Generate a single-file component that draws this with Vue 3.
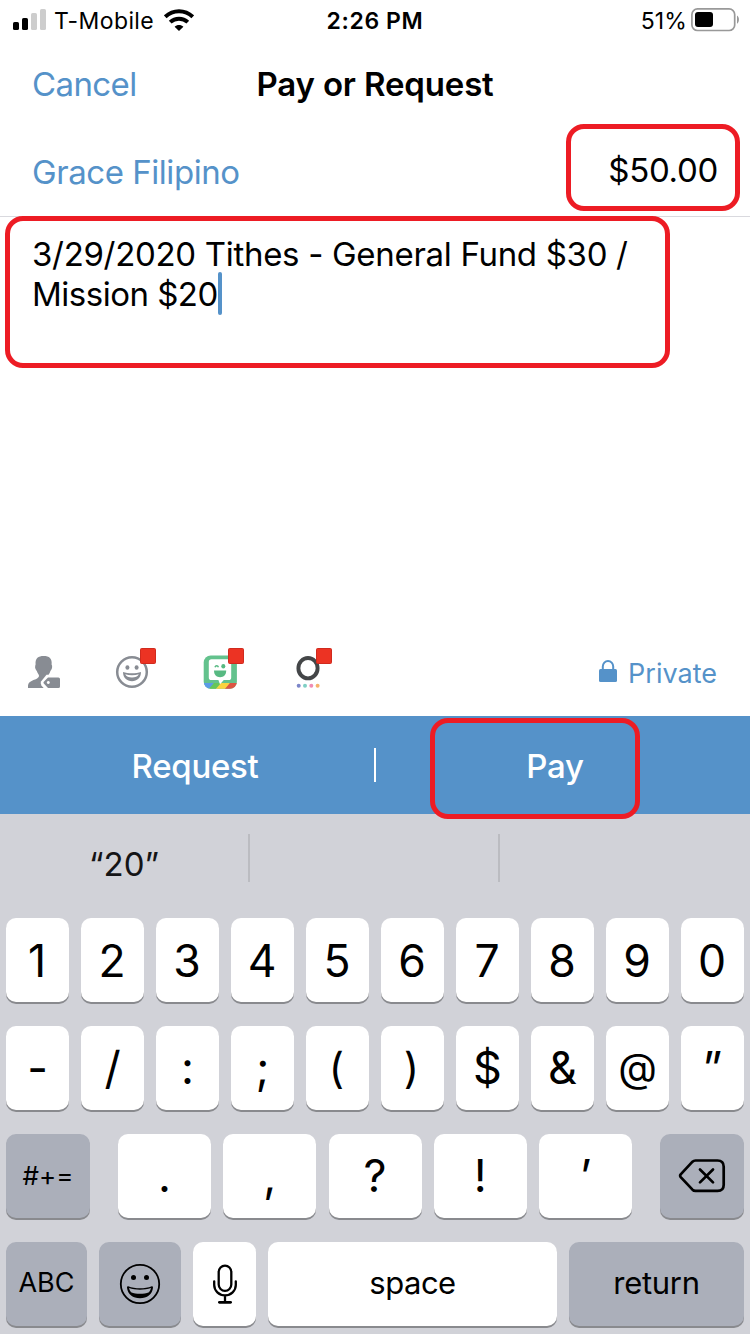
<script setup>
const rowOne = ['1', '2', '3', '4', '5', '6', '7', '8', '9', '0']
const rowTwo = [
  { c: '-', k: 'hyphen' }, { c: '/', k: 'slash' }, { c: ':', k: 'colon' }, { c: ';', k: 'semi' },
  { c: '(', k: 'paren' }, { c: ')', k: 'paren' }, { c: '$', k: 'dollar' }, { c: '&', k: 'amp' },
  { c: '@', k: 'at' }, { c: '”', k: 'quote' }
]
const rowThree = [
  { c: '.', k: 'dot' }, { c: ',', k: 'comma' }, { c: '?', k: 'ask' }, { c: '!', k: 'bang' }, { c: '’', k: 'apos' }
]
</script>

<template>
  <div class="screen">
    <header class="status">
      <div class="carrier">
        <svg class="signal" width="34" height="22" viewBox="0 0 34 22">
          <rect x="0" y="13" width="6" height="8" rx="1.6" fill="#000" />
          <rect x="9" y="9" width="6" height="12" rx="1.6" fill="#000" />
          <rect x="18" y="4" width="6" height="17" rx="1.6" fill="#cdcdcd" />
          <rect x="27" y="0" width="6" height="21" rx="1.6" fill="#cdcdcd" />
        </svg>
        <span class="carrier-name">T-Mobile</span>
        <svg class="wifi" width="30" height="22" viewBox="0 0 30 22">
          <g fill="none" stroke="#000" stroke-width="4">
            <path d="M1.200 7.800C9 .3 21 .3 28.800 7.800" />
            <path d="M6.200 13.100C11.200 8.500 18.800 8.500 23.800 13.100" />
          </g>
          <path d="M15 22l-4.400-4.300c2.400-2.300 6.400-2.300 8.800 0z" />
        </svg>
      </div>
      <div class="clock">2:26 PM</div>
      <div class="power">
        <span class="percent">51%</span>
        <svg width="49" height="24" viewBox="0 0 49 24">
          <rect x=".9" y=".9" width="42.800" height="21.600" rx="5.600" fill="none" stroke="#999" stroke-width="1.700" />
          <rect x="4" y="4" width="18" height="15" rx="3" />
          <path d="M46 7.600c2.600 1.400 2.600 6.800 0 8.200z" fill="#999" />
        </svg>
      </div>
    </header>

    <nav class="nav">
      <a class="cancel">Cancel</a>
      <h1 class="title">Pay or Request</h1>
    </nav>

    <section class="recipient">
      <span class="name">Grace Filipino</span>
      <span class="amount">$50.00</span>
      <i class="ring ring-amount"></i>
    </section>

    <section class="note">
      <p class="line one">3/29/2020 Tithes - General Fund $30 /</p>
      <p class="line two"><span>Mission $20</span><i class="caret"></i></p>
      <i class="ring ring-note"></i>
    </section>

    <section class="tools">
      <svg class="tool" width="48" height="44" viewBox="0 0 48 44">
        <path fill="#888c93" d="M0 42v-2.500c0-2.500 2.500-4 5-5.200 3-1.300 6-2.400 6-4.600 0-1.500-1.600-2.400-2.200-4.700-1-.8-2.100-3.300-1.600-5 0-.7.400-1 .4-1.400-.6-6.600 2.800-8.600 8-8.600 5.600 0 8.800 2.500 8 8.600 0 .5.500.8.500 1.500.3 1.900-.8 4.200-1.700 4.900-.5 2.300-2 3.300-2 4.700 0 .6.400 1 .4 1L13.300 36v3.500L15.800 42z" />
        <path d="M12.800 37.800V35.800L18.500 28.800H32.500V43H17z" fill="#fff" />
        <path fill="#888c93" fill-rule="evenodd" d="M20 31.400h10.400q1.600 0 1.600 1.600v7.400q0 1.600-1.600 1.600H20l-4.200-4.400q-.8-.9 0-1.800zM20.300 35a1.500 1.500 0 1 0 .01 0z" />
      </svg>
      <svg class="tool face" width="48" height="44" viewBox="0 0 48 44">
        <circle cx="16" cy="26" r="14.800" fill="none" stroke="#888c93" stroke-width="2.500" />
        <ellipse cx="11.400" cy="21.500" rx="2" ry="2.200" fill="#888c93" />
        <ellipse cx="20.600" cy="21.500" rx="2" ry="2.200" fill="#888c93" />
        <path d="M7 26c5 1.800 13 1.800 18 0 0 5.800-4 9.200-9 9.200s-9-3.400-9-9.200z" fill="#888c93" />
        <path d="M9.200 28.200c4 1.300 9.600 1.300 13.600 0-1 2.200-3.600 3.300-6.800 3.300s-5.800-1.100-6.800-3.300z" fill="#fff" />
        <rect x="24.500" y="2.500" width="15" height="15" rx="1" fill="#ec3323" stroke="#d02a1e" />
      </svg>
      <svg class="tool" width="48" height="44" viewBox="0 0 48 44">
        <defs><clipPath id="tile"><rect x="-.3" y="9.500" width="33.200" height="33.200" rx="7" /></clipPath></defs>
        <g clip-path="url(#tile)">
          <rect x="-1" y="9" width="35" height="35" fill="#63c28d" />
          <path d="M-1 37h11l-6 7h-5z" fill="#5a9be6" />
          <path d="M10 37h7l-6 7H4z" fill="#66c659" />
          <path d="M17 37h9l-5 7H11z" fill="#fad33f" />
          <path d="M26 37h8v7H20z" fill="#dc5543" />
        </g>
        <path d="M7.500 13.200h17q2.700 0 2.700 2.700v15.500q0 2.700-2.700 2.700h-4.700L16 38.200l-1.600-4.100H7.500q-2.700 0-2.700-2.700V15.900q0-2.700 2.700-2.700z" fill="#fff" />
        <path d="M10 24.500h12.200c0 4.500-2.500 6.700-6.100 6.700S10 29 10 24.500z" fill="#57b982" />
        <ellipse cx="19.300" cy="20.300" rx="2" ry="2.300" fill="#57b982" />
        <path d="M11 21.300c.6-2 2.800-2 3.400 0" fill="none" stroke="#57b982" stroke-width="1.500" />
        <rect x="24.500" y="2.500" width="15" height="15" rx="1" fill="#ec3323" stroke="#d02a1e" />
      </svg>
      <svg class="tool" width="48" height="44" viewBox="0 0 48 44">
        <ellipse cx="16" cy="22.200" rx="9.600" ry="10.200" fill="none" stroke="#444648" stroke-width="3.900" />
        <circle cx="6.700" cy="39.700" r="2" fill="#7c86c9" />
        <circle cx="13" cy="39.700" r="2" fill="#7fcfc4" />
        <circle cx="19.300" cy="39.700" r="2" fill="#f08cb4" />
        <circle cx="25.600" cy="39.700" r="2" fill="#f6b26b" />
        <rect x="24.500" y="2.500" width="15" height="15" rx="1" fill="#ec3323" stroke="#d02a1e" />
      </svg>
      <div class="privacy">
        <svg width="18" height="22" viewBox="0 0 18 22">
          <path d="M3.800 10V6.600a5.200 5.600 0 0 1 10.400 0V10" fill="none" stroke="#5592c9" stroke-width="2" />
          <rect y="9" width="18" height="13" rx="1.500" fill="#5592c9" />
        </svg>
        <span>Private</span>
      </div>
    </section>

    <section class="actions">
      <button class="action request"><span>Request</span></button>
      <i class="split"></i>
      <button class="action pay"><span>Pay</span></button>
      <i class="ring ring-pay"></i>
    </section>

    <section class="keyboard">
      <div class="suggestions">
        <span class="suggestion"><b>“20”</b></span>
        <span class="suggestion"></span>
        <span class="suggestion"></span>
      </div>
      <div class="row even">
        <div v-for="k in rowOne" :key="k" class="key digit"><span>{{ k }}</span></div>
      </div>
      <div class="row even">
        <div v-for="k in rowTwo" :key="k.c" class="key" :class="k.k"><span>{{ k.c }}</span></div>
      </div>
      <div class="row third">
        <div class="key dark symbols"><span>#+=</span></div>
        <div v-for="k in rowThree" :key="k.c" class="key" :class="k.k"><span>{{ k.c }}</span></div>
        <div class="key dark erase">
          <svg width="48" height="36" viewBox="0 0 48 36" fill="none" stroke="#000" stroke-width="2.700" stroke-linecap="round" stroke-linejoin="round">
            <path d="M17.500 2.500H39.500Q45.700 2.500 45.700 8.700V26.700Q45.700 32.900 39.500 32.900H17.500Q15.700 32.900 14.500 31.700L2.700 19.100Q1.600 17.700 2.700 16.300L14.500 3.700Q15.700 2.500 17.500 2.500Z" />
            <path d="M22 11.500l13 12.900M35 11.500L22 24.400" />
          </svg>
        </div>
      </div>
      <div class="row fourth">
        <div class="key dark abc"><span>ABC</span></div>
        <div class="key dark emoji">
          <svg width="42" height="42" viewBox="0 0 42 42">
            <circle cx="21" cy="21" r="19.200" fill="none" stroke="#000" stroke-width="1.800" />
            <circle cx="14.500" cy="14.500" r="2.500" />
            <circle cx="27.500" cy="14.500" r="2.500" />
            <path d="M9.200 23.300c7 2.700 16.600 2.700 23.600 0 1 0 1.200.7 1.200 1.400-.7 6.600-6 10.500-13 10.500S8.700 31.300 8 24.700c0-.7.200-1.400 1.200-1.400z" />
            <path d="M10 25.100c6.500 2.200 15.500 2.200 22 0-.4 2-1.200 3-2 4.100-5.200 2-12.800 2-18 0-.8-1.100-1.600-2.100-2-4.100z" fill="#abafba" />
          </svg>
        </div>
        <div class="key mic">
          <svg width="26" height="40" viewBox="0 0 26 40" fill="none" stroke="#000" stroke-width="2.300" stroke-linecap="round">
            <rect x="6.700" y="1.600" width="12.600" height="25.200" rx="6.300" />
            <path d="M2.200 17.300v3.800a10.800 10.300 0 0 0 21.600 0V17.300M13 31.800V38" />
            <path d="M7.400 38.300h11.200" stroke-width="2.800" />
          </svg>
        </div>
        <div class="key space"><span>space</span></div>
        <div class="key dark return"><span>return</span></div>
      </div>
    </section>
  </div>
</template>

<style>
body { margin: 0; background: #fff; }
</style>

<style scoped>
.screen {
  width: 750px; height: 1334px; overflow: hidden; display: flex; flex-direction: column;
  background: #fff; color: #000; font-family: Inter, "Liberation Sans", sans-serif; position: relative;
}
.screen span, .screen b, .line { white-space: nowrap; }
.ring { position: absolute; box-sizing: border-box; border: 5px solid #ed1c24; border-radius: 18px; pointer-events: none; }
.status { height: 40px; flex: none; display: grid; grid-template-columns: 1fr auto 1fr; font-size: 23px; line-height: 40px; }
.carrier { display: flex; padding-left: 13px; }
.signal { margin-top: 9px; }
.carrier-name { width: 101px; margin-left: 7px; margin-top: 1px; letter-spacing: .4px; }
.wifi { margin-left: 9px; margin-top: 9px; }
.clock { font-weight: 600; letter-spacing: .6px; margin-top: 1px; }
.power { display: flex; justify-content: flex-end; padding-right: 10px; }
.power svg { margin-top: 8px; }
.percent { margin-right: 4px; margin-top: 1px; letter-spacing: .1px; }
.nav { height: 88px; flex: none; display: grid; grid-template-columns: 1fr auto 1fr; line-height: 88px; }
.cancel { padding-left: 32px; font-size: 33px; color: #5592c9; letter-spacing: -.6px; }
.title { margin: 0; font-size: 33px; font-weight: 600; letter-spacing: -.15px; }
.recipient { height: 88px; flex: none; display: flex; justify-content: space-between; padding: 0 32px; border-bottom: 1px solid #d9d9de; line-height: 88px; position: relative; font-size: 33px; }
.name { color: #5592c9; letter-spacing: -.45px; }
.amount { margin-top: -2px; letter-spacing: -.3px; }
.ring-amount { left: 566px; top: -4px; width: 174px; height: 87px; }
.note { flex: 1; padding: 17px 32px 0; position: relative; font-size: 33px; line-height: 40px; }
.line { margin: 0; display: flex; letter-spacing: -.31px; }
.two { letter-spacing: -.5px; }
.caret { width: 4px; height: 43px; border-radius: 2px; background: #5592c9; margin-top: -2px; margin-bottom: -2px; }
.ring-note { left: 5px; top: -1px; width: 665px; height: 152px; }
.tools { height: 70px; flex: none; display: flex; gap: 40px; padding-left: 28px; }
.tool { overflow: visible; }
.privacy { margin-left: auto; padding-right: 33px; display: flex; color: #5592c9; font-size: 27px; line-height: 56px; }
.privacy svg { margin: 14px 11px 0 0; }
.actions { height: 98px; flex: none; background: #5592c9; display: flex; align-items: center; position: relative; }
.action { flex: 1; height: 98px; padding: 0; border: 0; background: none; color: #fff; font: 500 33px/100px Inter, "Liberation Sans", sans-serif; letter-spacing: -.3px; }
.request { padding-left: 16px; }
.pay { padding-right: 16px; }
.split { width: 2px; height: 34px; background: #fff; }
.ring-pay { left: 430px; top: 2px; width: 210px; height: 101px; z-index: 2; }
.keyboard { height: 520px; flex: none; background: #d1d2d8; }
.suggestions { height: 104px; display: grid; grid-template-columns: 250px 250px 250px; }
.suggestion { box-sizing: border-box; height: 48px; margin-top: 20px; line-height: 60px; text-align: center; border-right: 2px solid #bbbcc1; font-size: 33px; color: #141416; }
.suggestion:last-child { border: 0; }
.suggestion b { font-weight: 400; }
.row { display: flex; height: 84px; margin: 0 6px 24px; }
.even { gap: 12px; }
.key { box-sizing: border-box; height: 84px; border-radius: 10px; background: #fff; box-shadow: 0 2px 0 #898a8e; display: flex; align-items: center; justify-content: center; font-size: 45px; line-height: 84px; }
.even .key { width: 63px; }
.digit { padding-top: 1px; padding-right: 1px; font-size: 44.500px; }
.paren { padding-right: 2px; font-size: 42px; }
.at { font-size: 40px; }
.dark { background: #abafba; }
.third .key { width: 93px; margin-right: 12.250px; }
.third .key.symbols { width: 84px; margin-right: 28px; font-size: 26px; }
.third .key.apos { margin-right: 28px; }
.third .key.erase { width: 84px; margin-right: 0; }
.fourth { gap: 12px; }
.fourth .abc { width: 81px; font-size: 27px; }
.fourth .emoji { width: 82px; }
.fourth .mic { width: 63px; }
.fourth .space { width: 289px; font-size: 31px; letter-spacing: -.5px; }
.fourth .return { width: 175px; font-size: 31px; letter-spacing: -.3px; }
.fourth span { margin-top: -3px; }
</style>
